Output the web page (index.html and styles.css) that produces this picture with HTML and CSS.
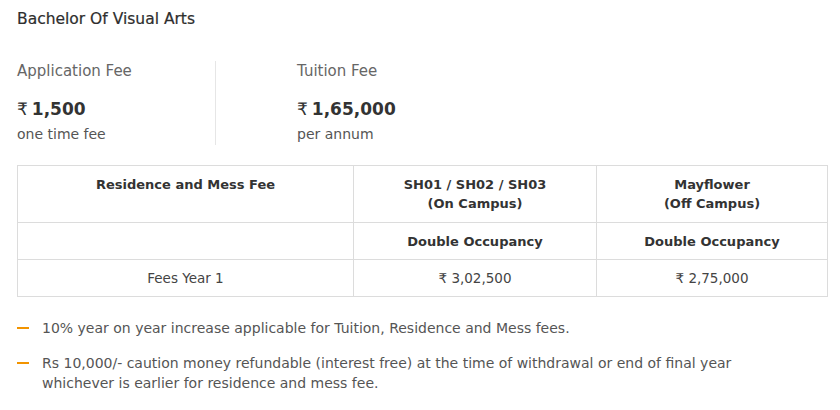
FILE: index.html
```html
<!DOCTYPE html>
<html>
<head>
<meta charset="utf-8">
<link rel="stylesheet" href="styles.css">
</head>
<body>
<div class="page">
  <h2 class="title">Bachelor Of Visual Arts</h2>
  <div class="fees">
    <div class="fee fee-first">
      <div class="fee-label">Application Fee</div>
      <div class="fee-amount"><span class="rupee">₹</span>1,500</div>
      <div class="fee-note">one time fee</div>
    </div>
    <div class="fee fee-second">
      <div class="fee-label">Tuition Fee</div>
      <div class="fee-amount"><span class="rupee">₹</span>1,65,000</div>
      <div class="fee-note">per annum</div>
    </div>
  </div>
  <table class="fee-table">
    <colgroup>
      <col class="c1"><col class="c2"><col class="c3">
    </colgroup>
    <tr class="row-head">
      <th>Residence and Mess Fee</th>
      <th>SH01 / SH02 / SH03<br>(On Campus)</th>
      <th>Mayflower<br>(Off Campus)</th>
    </tr>
    <tr class="row-sub">
      <th></th>
      <th>Double Occupancy</th>
      <th>Double Occupancy</th>
    </tr>
    <tr class="row-data">
      <td>Fees Year 1</td>
      <td>₹ 3,02,500</td>
      <td>₹ 2,75,000</td>
    </tr>
  </table>
  <ul class="notes">
    <li>10% year on year increase applicable for Tuition, Residence and Mess fees.</li>
    <li>Rs 10,000/- caution money refundable (interest free) at the time of withdrawal or end of final year whichever is earlier for residence and mess fee.</li>
  </ul>
</div>
</body>
</html>
```
FILE: styles.css
```css
html, body {
  margin: 0;
  padding: 0;
  background: #fff;
}
body {
  font-family: "DejaVu Sans", sans-serif;
  color: #555;
}
.page {
  padding: 9px 17px 0 17px;
}
.title {
  margin: 0;
  font-size: 15.5px;
  font-weight: normal;
  color: #2e2e2e;
  line-height: 20px;
  -webkit-text-stroke: 0.2px #2e2e2e;
}
.fees {
  display: flex;
  margin-top: 32px;
}
.fee-first {
  width: 198px;
  border-right: 1px solid #e6e6e6;
}
.fee-second {
  padding-left: 81px;
}
.fee-label {
  font-size: 15px;
  line-height: 20px;
  color: #666;
}
.fee-amount {
  margin-top: 15px;
  font-size: 17px;
  line-height: 26px;
  font-weight: bold;
  color: #333;
}
.rupee {
  font-weight: normal;
  margin-right: 4px;
}
.fee-note {
  margin-top: 2px;
  font-size: 14px;
  line-height: 20px;
  color: #555;
  padding-bottom: 1px;
}
.fee-table {
  margin-top: 20px;
  width: 811px;
  border-collapse: collapse;
  font-size: 13.5px;
  color: #444;
}
.c1 { width: 336px; }
.c2 { width: 243px; }
.c3 { width: 231px; }
.fee-table th, .fee-table td {
  border: 1px solid #dcdcdc;
  text-align: center;
  padding: 0 8px;
  line-height: 19px;
}
.fee-table th {
  font-size: 13px;
  font-weight: 600;
  color: #333;
}
.row-head th {
  height: 57px;
  vertical-align: top;
  padding-top: 9px;
  box-sizing: border-box;
}
.row-sub th, .row-data td {
  height: 37px;
  vertical-align: middle;
  box-sizing: border-box;
}
.notes {
  list-style: none;
  margin: 21px 0 0 0;
  padding: 0;
  max-width: 780px;
  font-size: 14px;
  line-height: 20px;
  color: #555;
}
.notes li {
  position: relative;
  padding-left: 25px;
  margin-bottom: 15px;
}
.notes li::before {
  content: "";
  position: absolute;
  left: 0;
  top: 9px;
  width: 12px;
  height: 2px;
  background: #f29400;
}
```
